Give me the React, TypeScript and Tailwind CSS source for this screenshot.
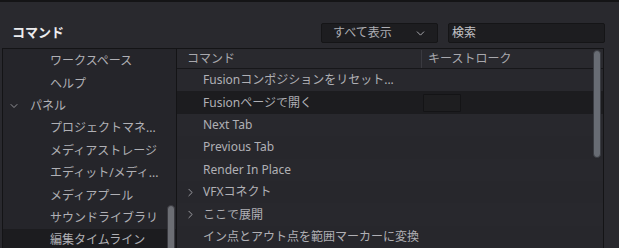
import { ChevronDown, ChevronRight } from 'lucide-react';

const font = 'font-["Noto_Sans","Noto_Sans_CJK_JP",sans-serif]';

const sideItems: { label: string; indent: boolean; open?: boolean; active?: boolean }[] = [
  { label: 'ワークスペース', indent: true },
  { label: 'ヘルプ', indent: true },
  { label: 'パネル', indent: false, open: true },
  { label: 'プロジェクトマネ...', indent: true },
  { label: 'メディアストレージ', indent: true },
  { label: 'エディット/メディ...', indent: true },
  { label: 'メディアプール', indent: true },
  { label: 'サウンドライブラリ', indent: true },
  { label: '編集タイムライン', indent: true, active: true },
];

const rows: { label: string; group?: boolean; active?: boolean; key?: boolean }[] = [
  { label: 'Fusionコンポジションをリセット...' },
  { label: 'Fusionページで開く', active: true, key: true },
  { label: 'Next Tab' },
  { label: 'Previous Tab' },
  { label: 'Render In Place' },
  { label: 'VFXコネクト', group: true },
  { label: 'ここで展開', group: true },
  { label: 'イン点とアウト点を範囲マーカーに変換' },
];

export default function App() {
  return (
    <div className={`${font} relative h-[248px] w-[619px] overflow-hidden border-t-2 border-[#141416] bg-[#29292e] text-[12px] text-[#b0b0b5]`}>
      <div className="flex h-[46px] items-end pb-[5px]">
        <div className="pl-3 pb-[1px] text-[13px] font-bold text-[#ececee]">コマンド</div>
        <div className="ml-auto flex gap-[10px] pr-[14px]">
          <div className="flex h-[20px] w-[117px] items-center justify-between rounded-[2px] border border-[#151517] bg-[#1d1d20] pl-[11px] pr-[10px] text-[#aeaeb3]">
            <span>すべて表示</span>
            <ChevronDown size={13} strokeWidth={1.75} />
          </div>
          <div className="flex h-[20px] w-[157px] items-center rounded-[2px] border border-[#151517] bg-[#1d1d20] pl-[3px] text-[#c4c4c8]">
            検索
          </div>
        </div>
      </div>

      <div className="ml-[2px] mr-[15px] flex h-[202px] border-l border-t border-r border-[#141416]">
        {/* sidebar */}
        <div className="relative w-[174px] shrink-0 border-r border-[#141416] bg-[#25252a] pt-[1px]">
          {sideItems.map((s) => (
            <div
              key={s.label}
              className={`flex h-[22.4px] items-center whitespace-nowrap ${s.active ? 'bg-[#1c1c1f]' : ''} ${s.indent ? 'pl-[47px]' : 'pl-[5px]'}`}
            >
              {s.open && <ChevronDown size={12} strokeWidth={1.75} className="mr-[10px] text-[#a0a0a5]" />}
              <span>{s.label}</span>
            </div>
          ))}
          <div className="absolute left-[164px] top-[156px] h-[60px] w-[8px] rounded-[4px] border border-[#3a3a40] bg-[#6c6e74]" />
        </div>

        {/* table */}
        <div className="relative flex-1 bg-[#26262b]">
          <div className="flex h-[20px] items-center border-b border-[#17171a] bg-[#29292e] text-[#a8a8ad]">
            <div className="w-[245px] border-r border-[#3a3a40] pl-[10px]">コマンド</div>
            <div className="pl-[6px]">キーストローク</div>
          </div>
          {rows.map((r, i) => (
            <div
              key={r.label}
              className={`flex h-[22.4px] items-center pr-[12px] ${r.active ? 'bg-[#1c1c1f]' : i % 2 ? 'bg-[#27272c]' : 'bg-[#28282d]'}`}
            >
              <div className="flex w-[246px] items-center whitespace-nowrap">
                <span className="flex w-[26px] justify-center pl-[1px]">
                  {r.group && <ChevronRight size={13} strokeWidth={1.75} className="text-[#a0a0a5]" />}
                </span>
                <span>{r.label}</span>
              </div>
              {r.key && <div className="h-[18px] w-[38px] rounded-[1px] border border-[#141416] bg-[#1e1e20]" />}
            </div>
          ))}
          <div className="absolute right-[2px] top-[1px] h-[108px] w-[8px] rounded-[4px] border border-[#3a3c42] bg-[#686c74]" />
        </div>
      </div>
    </div>
  );
}
